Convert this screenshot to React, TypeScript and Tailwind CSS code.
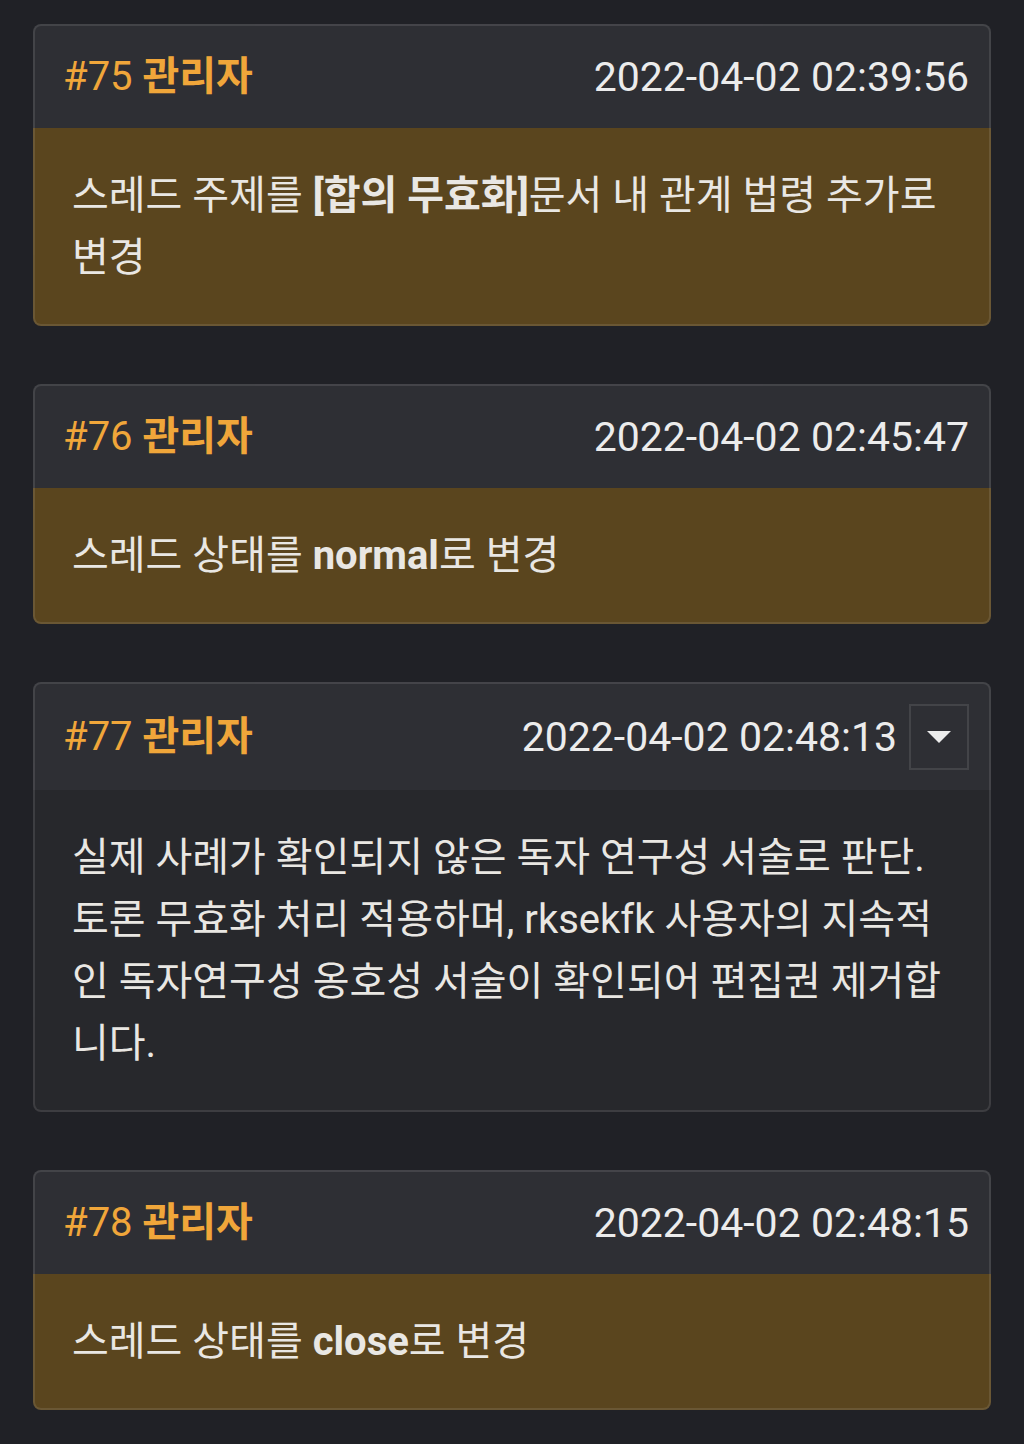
import React from "react";

function Header({ num, date, menu }: { num: string; date: string; menu?: boolean }) {
  return (
    <div className="flex items-center justify-between bg-[#2e2f34] border-2 border-b-0 border-white/10 rounded-t-lg pl-7 pr-5 py-5">
      <div className="h-[62px] flex items-center text-[40px] leading-[62px] text-[#f0a63a] whitespace-nowrap">
        <span>{num}&nbsp;</span>
        <span className="font-bold">관리자</span>
      </div>
      <div className="flex items-center gap-3">
        <span className="h-[62px] flex items-center text-[41px] leading-[62px] text-[#ececec] whitespace-nowrap">
          {date}
        </span>
        {menu && (
          <div className="w-[60px] h-[66px] border-2 border-white/10 flex items-center justify-center">
            <svg width="24" height="12" viewBox="0 0 24 12">
              <path d="M0 0 L24 0 L12 12 Z" fill="#ececec" />
            </svg>
          </div>
        )}
      </div>
    </div>
  );
}

function Line({ children }: { children: React.ReactNode }) {
  return <div className="h-[62px] leading-[62px] whitespace-nowrap overflow-visible">{children}</div>;
}

function Body({ children, gold }: { children: React.ReactNode; gold?: boolean }) {
  return (
    <div
      className={
        (gold ? "bg-[#5a451e] " : "bg-[#27282c] ") +
        "border-2 border-t-0 border-white/10 rounded-b-lg pl-[37px] pr-6 pt-[37px] pb-[35px] text-[40px] leading-[62px] text-[#e9e7e3]"
      }
    >
      {children}
    </div>
  );
}

export default function App() {
  return (
    <div
      className="min-h-[1444px] bg-[#202126] px-[33px] pt-6 pb-[30px] flex flex-col gap-[58px]"
      style={{ fontFamily: 'Roboto, "Noto Sans CJK KR", sans-serif' }}
    >
      <div className="flex flex-col">
        <Header num="#75" date="2022-04-02 02:39:56" />
        <Body gold>
          <Line>
            스레드 주제를 <span className="font-bold">[합의 무효화]</span>문서 내 관계 법령 추가로
          </Line>
          <Line>변경</Line>
        </Body>
      </div>

      <div className="flex flex-col">
        <Header num="#76" date="2022-04-02 02:45:47" />
        <Body gold>
          <Line>
            스레드 상태를 <span className="font-bold">normal</span>로 변경
          </Line>
        </Body>
      </div>

      <div className="flex flex-col">
        <Header num="#77" date="2022-04-02 02:48:13" menu />
        <Body>
          <Line>실제 사례가 확인되지 않은 독자 연구성 서술로 판단.</Line>
          <Line>토론 무효화 처리 적용하며, rksekfk 사용자의 지속적</Line>
          <Line>인 독자연구성 옹호성 서술이 확인되어 편집권 제거합</Line>
          <Line>니다.</Line>
        </Body>
      </div>

      <div className="flex flex-col">
        <Header num="#78" date="2022-04-02 02:48:15" />
        <Body gold>
          <Line>
            스레드 상태를 <span className="font-bold">close</span>로 변경
          </Line>
        </Body>
      </div>
    </div>
  );
}
